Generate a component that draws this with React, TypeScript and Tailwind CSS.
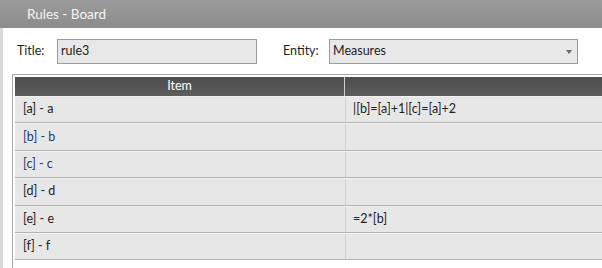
import React from "react";

const rows: { item: string; value: string; blue?: boolean }[] = [
  { item: "[a] - a", value: "|[b]=[a]+1|[c]=[a]+2" },
  { item: "[b] - b", value: "", blue: true },
  { item: "[c] - c", value: "", blue: true },
  { item: "[d] - d", value: "" },
  { item: "[e] - e", value: "=2*[b]" },
  { item: "[f] - f", value: "" },
];

export default function App() {
  return (
    <div
      className="w-[602px] h-[268px] overflow-hidden bg-white flex flex-col"
      style={{ fontFamily: 'Lato, "Noto Sans", sans-serif' }}
    >
      <div className="h-[28px] shrink-0 bg-gradient-to-b from-[#9c9c9c] to-[#8b8b8b] flex items-center pl-[27px] text-[13.5px] text-[#f4f4f4]">
        Rules - Board
      </div>
      <div className="flex-1 flex border-l-[3px] border-[#d9d9d9] min-h-0">
        <div className="flex-1 flex flex-col min-w-0">
          <div className="flex items-center mt-[11px] h-[25px] text-[12.5px] text-[#1e1e1e]">
            <span className="ml-[14px] w-[40px]">Title:</span>
            <div className="w-[200px] h-[25px] border border-[#9c9c9c] bg-[#e8e8e8] flex items-center pl-[3px]">
              rule3
            </div>
            <span className="ml-[26px] w-[46px]">Entity:</span>
            <div className="w-[249px] h-[25px] border border-[#9c9c9c] bg-[#e8e8e8] flex items-center pl-[3px] pr-[5px] justify-between">
              <span>Measures</span>
              <svg width="6" height="4" viewBox="0 0 6 4">
                <path d="M0 0 L6 0 L3 4 Z" fill="#6a6a6a" />
              </svg>
            </div>
          </div>
          <div className="ml-[9px] mt-[10px] flex-1 border-l border-t border-[#a9a9a9] pl-[2px] pt-[2px] bg-white min-h-0">
            <div className="flex h-[19px] bg-gradient-to-b from-[#4c4c4c] to-[#5e5e5e] text-white text-[12.5px]">
              <div className="w-[330px] shrink-0 flex items-center justify-center border-r border-[#cfcfcf]">
                Item
              </div>
              <div className="flex-1" />
            </div>
            {rows.map((r) => (
              <div
                key={r.item}
                className="flex h-[27.4px] bg-[#e7e7e7] border-t border-[#f3f3f3] border-b border-b-[#b3b3b3] text-[12.5px]"
              >
                <div
                  className={`w-[330px] shrink-0 flex items-center pl-[8px] ${
                    r.blue ? "text-[#1d3a6c]" : "text-[#222222]"
                  }`}
                >
                  {r.item}
                </div>
                <div className="w-px bg-[#d0d0d0]" />
                <div className="flex-1 flex items-center pl-[7px] text-[#222222]">
                  {r.value}
                </div>
              </div>
            ))}
          </div>
        </div>
      </div>
    </div>
  );
}
